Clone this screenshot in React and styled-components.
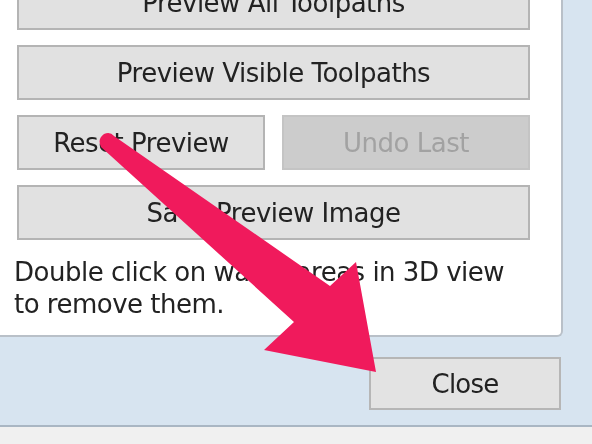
import styled, { createGlobalStyle } from 'styled-components';

const GlobalStyle = createGlobalStyle`
  html, body {
    margin: 0;
    padding: 0;
    background: #d7e4f0;
  }
  body {
    font-family: Tahoma, "DejaVu Sans", "Noto Sans", sans-serif;
  }
`;

function App() {
  return (
    <>
      <GlobalStyle />
      <Screen>
        <Panel>
          <ButtonStack>
            <Button $first>Preview All Toolpaths</Button>
            <Button>Preview Visible Toolpaths</Button>
            <ButtonRow>
              <Button>Reset Preview</Button>
              <Button disabled>Undo Last</Button>
            </ButtonRow>
            <Button>Save Preview Image</Button>
          </ButtonStack>
          <Hint>
            Double click on waste areas in 3D view
            <br />
            to remove them.
          </Hint>
        </Panel>
        <Footer>
          <CloseButton>Close</CloseButton>
        </Footer>
        <StatusStrip />
        {/* 주석 화살표 */}
        <Arrow viewBox="0 0 592 444">
          <path
            d="M104 134 Q97 139 101 147 L294 322 L264 350 L376 372 L356 262 L330 286 L114 136 Q110 131 104 134 Z"
            fill="#f01a5c"
          />
        </Arrow>
      </Screen>
    </>
  );
}

const Screen = styled.div`
  position: relative;
  width: 592px;
  height: 444px;
  overflow: hidden;
  background: #d7e4f0;
  filter: blur(0.5px);
`;

const Panel = styled.div`
  width: 563px;
  height: 337px;
  box-sizing: border-box;
  padding-left: 17px;
  padding-right: 31px;
  background: #ffffff;
  border-right: 2px solid #b9c0c8;
  border-bottom: 2px solid #b9c0c8;
  border-bottom-right-radius: 6px;
  overflow: hidden;
`;

const ButtonStack = styled.div`
  display: flex;
  flex-direction: column;
  gap: 15px;
`;

const ButtonRow = styled.div`
  display: flex;
  gap: 17px;
  & > * {
    flex: 1;
  }
`;

const Button = styled.div`
  height: 55px;
  margin-top: ${(p) => (p.$first ? '-25px' : '0')};
  box-sizing: border-box;
  display: flex;
  align-items: center;
  justify-content: center;
  background: ${(p) => (p.disabled ? '#cccccc' : '#e1e1e1')};
  border: 2px solid ${(p) => (p.disabled ? '#c4c4c4' : '#b4b4b4')};
  color: ${(p) => (p.disabled ? '#a2a2a2' : '#222222')};
  font-size: 26px;
  letter-spacing: -0.5px;
`;

const Hint = styled.p`
  margin: 16px 0 0 -3px;
  font-size: 26px;
  line-height: 32px;
  letter-spacing: -0.5px;
  color: #222222;
`;

const Footer = styled.div`
  height: 90px;
  display: flex;
  justify-content: flex-end;
  align-items: flex-start;
  padding-top: 20px;
  padding-right: 31px;
  box-sizing: border-box;
  border-bottom: 2px solid #a9b6c3;
`;

const CloseButton = styled.div`
  width: 192px;
  height: 53px;
  box-sizing: border-box;
  display: flex;
  align-items: center;
  justify-content: center;
  background: #e3e3e3;
  border: 2px solid #b6b6b6;
  color: #222222;
  font-size: 26px;
  letter-spacing: -0.8px;
`;

const StatusStrip = styled.div`
  height: 20px;
  background: #f0f0f0;
`;

const Arrow = styled.svg`
  position: absolute;
  left: 0;
  top: 0;
  width: 592px;
  height: 444px;
  pointer-events: none;
`;

export default App;
